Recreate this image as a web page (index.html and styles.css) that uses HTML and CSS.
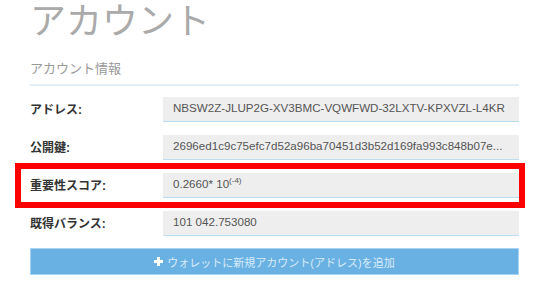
FILE: index.html
```html
<!DOCTYPE html>
<html lang="ja">
<head>
    <meta charset="UTF-8">
    <title>アカウント</title>
    <link rel="stylesheet" href="styles.css">
</head>
<body>

<div class="page">
    <h1 class="title">アカウント</h1>
    <h2 class="subtitle">アカウント情報</h2>

    <!-- Account info rows -->
    <div class="rows">
        <div class="row">
            <label class="label">アドレス:</label>
            <div class="value">NBSW2Z-JLUP2G-XV3BMC-VQWFWD-32LXTV-KPXVZL-L4KR</div>
        </div>
        <div class="row">
            <label class="label">公開鍵:</label>
            <div class="value">2696ed1c9c75efc7d52a96ba70451d3b52d169fa993c848b07e...</div>
        </div>
        <div class="row highlight">
            <label class="label">重要性スコア:</label>
            <div class="value">0.2660* 10<sup>(-4)</sup></div>
        </div>
        <div class="row">
            <label class="label">既得バランス:</label>
            <div class="value">101 042.753080</div>
        </div>
    </div>

    <button class="add-btn" type="button">
        <svg class="plus" width="9" height="9" viewBox="0 0 9 9"><path d="M3 0h3v3h3v3H6v3H3V6H0V3h3z" fill="#fff"/></svg>
        ウォレットに新規アカウント(アドレス)を追加
    </button>
</div>

</body>
</html>
```

FILE: styles.css
```css
body {
    margin: 0;
    font-family: "Liberation Sans", "Noto Sans CJK JP", Arial, sans-serif;
    background-color: #fff;
}

.page {
    width: 489px;
    padding-left: 30px;
}

.title {
    margin: 0;
    font-size: 36px;
    font-weight: normal;
    line-height: 44px;
    color: #aaa;
}

.subtitle {
    margin: 15px 0 0;
    padding-bottom: 5px;
    font-size: 13px;
    font-weight: normal;
    line-height: 20px;
    color: #999;
    border-bottom: 2px solid #e1effa;
}

.rows {
    margin-top: 11px;
}

.row {
    display: flex;
    align-items: center;
    margin-bottom: 13px;
    position: relative;
}

.label {
    width: 133px;
    padding-bottom: 3px;
    font-size: 12px;
    font-weight: bold;
    color: #333;
}

.value {
    flex: 1;
    height: 24px;
    line-height: 22px;
    padding-left: 10px;
    font-size: 11.6px;
    color: #555;
    background-color: #eee;
    border-bottom: 1px solid #bcdcf1;
    white-space: nowrap;
    overflow: hidden;
}

.value sup {
    font-size: 8px;
    vertical-align: 5px;
    line-height: 0;
}

.highlight::after {
    content: "";
    position: absolute;
    left: -15px;
    right: -6px;
    top: -10px;
    bottom: -10px;
    border: 6px solid #f00;
}

.add-btn {
    display: flex;
    align-items: center;
    justify-content: center;
    gap: 4px;
    width: 489px;
    height: 27px;
    margin-top: -1px;
    padding: 0;
    font-family: "Liberation Sans", "Noto Sans CJK JP", sans-serif;
    font-size: 11px;
    color: #d7ebf9;
    background-color: #6ab1e3;
    border: 1px solid #a9d3f2;
    cursor: pointer;
}
```
